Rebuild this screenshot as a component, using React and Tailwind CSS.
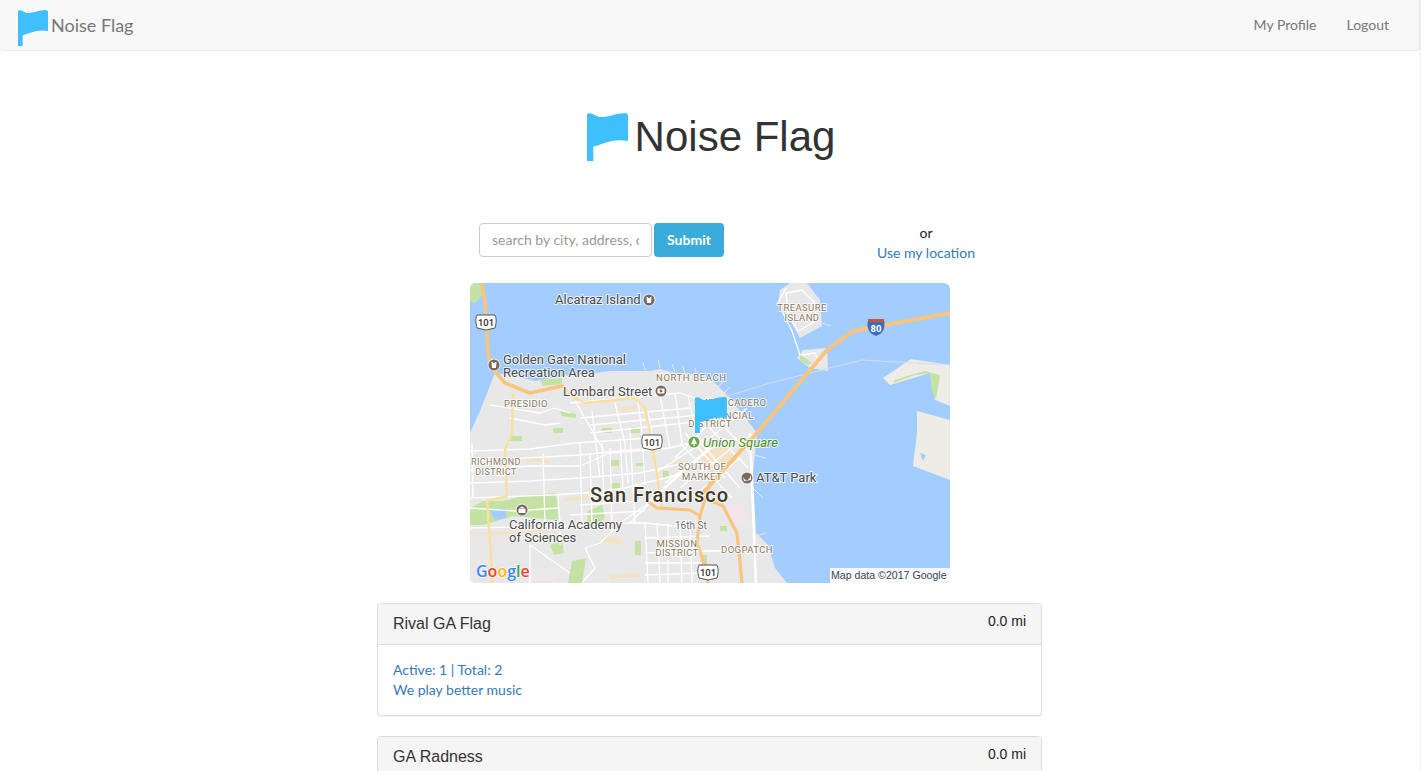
import React from "react";

const FLAG = "M0 1C3-1 7 2 10 3.5C18 6 28-1 37 0.3Q39 0.6 39 2L39 28C30 26 22 28 14 31C11 32 9 33 6 33.5L6 48L0 48Z";

function Flag({ className }) {
  return (
    <svg viewBox="0 0 39 48" preserveAspectRatio="none" className={className} fill="#40bfff">
      <path d={FLAG} />
    </svg>
  );
}

// map data, in pixels of the 480x300 map
const land = [
  "M0 150L10 128L25 90L40 92L65 98L100 92L125 90L140 88L180 88L190 86L205 90L230 92L245 100L260 115L287 150L283 190L286 250L298 262L305 285L317 300L0 300Z",
  "M310 7L320 0L337 0L350 17L352 43L330 55L320 37L308 20Z",
  "M327 75L333 67L357 65L358 88L340 85Z",
];

const eastLand = [
  "M413 95L441 76L480 82L480 123L465 117L460 90L420 102Z",
  "M447 128L480 137L480 197L443 183L447 150Z",
];

const parks = [
  "M0 225L13 218L33 218L57 212L87 210L88 237L43 233L13 242L0 242Z",
  "M118 228L132 222L135 235L125 244L117 240Z",
  "M80 262L92 258L94 270L84 272Z",
  "M102 278L116 275L112 300L98 300Z",
  "M140 200L150 200L150 208L140 208Z",
  "M165 258L171 258L171 272L165 272Z",
  "M71 97L92 95L92 101L72 103Z",
  "M90 128L106 131L106 135L92 133Z",
  "M83 145L93 145L93 150L83 150Z",
  "M132 145L142 145L142 150L132 150Z",
  "M161 144L170 144L170 150L161 150Z",
  "M423 100L445 92L460 90L462 110L466 116L470 92L455 88L440 92L425 97Z",
  "M250 243L257 243L257 248L250 248Z",
  "M231 272L237 272L237 283L231 283Z",
  "M140 177L149 177L149 183L140 183Z",
  "M166 180L175 180L175 183L166 183Z",
  "M193 188L199 188L199 195L193 195Z",
  "M40 153L52 153L52 158L40 158Z",
  "M331 72L342 80L338 82L329 77Z",
];

const sand = [
  "M95 215L118 212L118 216L95 219Z",
  "M148 125L166 122L166 126L150 129Z",
  "M0 250L80 247L80 250L0 252Z",
  "M140 292L170 290L170 294L140 296Z",
  "M135 252L155 258L150 262L132 258Z",
  "M47 172L80 178L80 181L47 176Z",
  "M155 165L170 165L170 168L155 168Z",
  "M228 170L262 160L262 178L240 190Z",
  "M200 178L216 178L216 182L200 182Z",
];

const pink = [
  "M255 222L274 222L276 240L258 240Z",
  "M86 208L92 208L92 216L86 216Z",
  "M140 232L150 232L150 240L140 240Z",
  "M60 292L85 292L85 298L60 298Z",
];

const whiteRoads = [
  "M0 187L60 183L110 183L140 170L200 165L240 155",
  "M0 168L60 166L105 160L180 155",
  "M0 200L60 198L110 195L170 190L215 180",
  "M0 215L80 212L115 210L155 205L215 190",
  "M0 245L95 243L150 240L175 240L225 245",
  "M0 178L110 172L170 166",
  "M110 222L170 218",
  "M100 232L175 228",
  "M88 212L90 240L90 262",
  "M73 170L75 240",
  "M2 160L3 215",
  "M110 160L112 240",
  "M120 170L122 240",
  "M132 160L134 222",
  "M140 165L142 240",
  "M150 155L154 222",
  "M160 150L165 240",
  "M122 128L130 195",
  "M145 120L155 160L158 200",
  "M168 118L172 150L175 200",
  "M100 120L210 110L225 115",
  "M110 135L220 125",
  "M120 142L230 132",
  "M120 150L235 138",
  "M105 118L135 170",
  "M178 130L182 150",
  "M190 112L200 165",
  "M205 110L212 160",
  "M218 112L226 150",
  "M115 265L130 260L150 240L176 222",
  "M115 265L125 285L112 300",
  "M175 240L178 300",
  "M187 240L190 300",
  "M198 240L198 300",
  "M210 240L212 300",
  "M220 240L222 300",
  "M175 255L240 253",
  "M175 270L240 268L280 268",
  "M175 280L235 280",
  "M175 292L235 290",
  "M185 190L240 155L277 125",
  "M195 200L255 155",
  "M210 205L262 165",
  "M225 212L270 175",
  "M205 175L250 130",
  "M210 160L262 215",
  "M222 150L270 205",
  "M235 140L278 185",
  "M215 150L255 195",
  "M245 135L280 170",
  "M316 5L308 20L322 48L330 72",
  "M316 10L332 7L345 20L346 38L328 48L318 30Z",
  "M160 240L178 222",
  "M20 122L70 130L85 125L100 130",
  "M40 135L75 142L90 140",
  "M0 225L45 228L88 225",
  "M60 300L60 262L100 290",
  "M332 72L345 70L350 80",
];

const piers = [
  "M175 87L173 80",
  "M190 85L188 77",
  "M205 89L202 81",
  "M215 91L213 83",
  "M227 92L225 85",
  "M240 97L246 91",
  "M248 104L254 98",
  "M254 110L260 104",
  "M282 163L292 163",
  "M284 172L296 175",
  "M283 205L293 215",
  "M286 253L296 250",
  "M287 265L298 262",
  "M352 40L361 43",
];

function PlaceIcon({ x, y, children, fill = "#7b6a5e" }) {
  return (
    <g>
      <circle cx={x} cy={y} r="6.5" fill="#fff" opacity="0.7" />
      <circle cx={x} cy={y} r="5.5" fill={fill} />
      {children}
    </g>
  );
}

function Label({ x, y, children, size = 13, fill = "#4b4b4b", anchor = "start", weight = 400, spacing = 0, italic = false }) {
  return (
    <text
      x={x}
      y={y}
      fontSize={size}
      fill={fill}
      textAnchor={anchor}
      fontWeight={weight}
      letterSpacing={spacing}
      fontStyle={italic ? "italic" : "normal"}
      stroke="#ffffff"
      strokeOpacity="0.75"
      strokeWidth="2"
      paintOrder="stroke"
    >
      {children}
    </text>
  );
}

function Shield({ x, y, label }) {
  return (
    <g>
      <path d={`M${x - 9} ${y - 7}L${x + 9} ${y - 7}C${x + 11} ${y - 3} ${x + 10} ${y + 2} ${x + 9} ${y + 6}L${x} ${y + 8}L${x - 9} ${y + 6}C${x - 10} ${y + 2} ${x - 11} ${y - 3} ${x - 9} ${y - 7}Z`} fill="#fff" stroke="#555" strokeWidth="1" />
      <text x={x} y={y + 3.5} textAnchor="middle" fontSize="9.5" fontWeight="500" fill="#333">{label}</text>
    </g>
  );
}

function SfMap() {
  return (
    <svg viewBox="0 0 480 300" className="block w-full h-full" style={{ fontFamily: "Roboto, sans-serif" }}>
      <rect width="480" height="300" fill="#a3ccff" />
      {land.map((d) => <path key={d} d={d} fill="#e8e8e8" />)}
      {eastLand.map((d) => <path key={d} d={d} fill="#eeece6" />)}
      <path d="M0 0L12 0L12 12L5 20L0 18Z" fill="#c5e2a5" />
      {parks.map((d) => <path key={d} d={d} fill="#c5e2a5" />)}
      {sand.map((d) => <path key={d} d={d} fill="#f3e2c6" />)}
      {pink.map((d) => <path key={d} d={d} fill="#f3e6ea" />)}
      <path d="M20 228L35 225L37 235L25 237Z" fill="#a3ccff" />
      <path d="M450 170L456 172L453 178Z" fill="#a3ccff" />
      <path d="M245 117L300 100L392 77L480 82" fill="none" stroke="#d4dfe8" strokeWidth="1" />

      <g fill="none" stroke="#e8e8e8" strokeWidth="1">
        {piers.map((d) => <path key={d} d={d} />)}
      </g>
      <g fill="none" stroke="#ffffff" strokeWidth="1.3" strokeLinejoin="round">
        {whiteRoads.map((d) => <path key={d} d={d} />)}
      </g>
      <path d="M176 222L200 200L240 165" fill="none" stroke="#ffffff" strokeWidth="2.5" />
      <path d="M280 150L286 300" fill="none" stroke="#ffffff" strokeWidth="2.5" />

      {/* yellow roads */}
      <g fill="none" stroke="#fbe09c" strokeWidth="2.4" strokeLinejoin="round">
        <path d="M92 103L105 115L115 120L165 115L175 125L182 160L192 224" />
        <path d="M43 110L42 150L35 167L37 213L17 218L23 300" />
      </g>
      {/* highways */}
      <g fill="none" stroke="#fac47c" strokeLinejoin="round" strokeLinecap="round">
        <path d="M12 0L15 20L18 70L22 85L35 100L60 110L92 103" strokeWidth="3.6" />
        <path d="M230 213L287 150L357 67L383 48L480 30" strokeWidth="4" />
        <path d="M177 218L187 225L220 227L230 233L240 200" strokeWidth="3" />
        <path d="M230 213L253 223L267 250L272 300" strokeWidth="3.2" />
        <path d="M230 233L227 260L233 277L238 300" strokeWidth="3" />
      </g>

      <Shield x={16} y={39} label="101" />
      <Shield x={182} y={159} label="101" />
      <Shield x={238} y={289} label="101" />
      <g>
        <path d="M398 37L414 37C416 46 412 51 406 53C400 51 396 46 398 37Z" fill="#3a6fb7" />
        <rect x="398" y="36" width="16" height="3" fill="#c9503f" />
        <text x="406" y="49" textAnchor="middle" fontSize="9.5" fontWeight="700" fill="#fff">80</text>
      </g>

      <PlaceIcon x={179} y={17}><path d="M176.5 14L178 14L178 15L180 15L180 14L181.5 14L181 20L177 20Z" fill="#fff" /></PlaceIcon>
      <PlaceIcon x={24} y={82}><path d="M21.5 79L23 79L23 80L25 80L25 79L26.5 79L26 85L22 85Z" fill="#fff" /></PlaceIcon>
      <PlaceIcon x={191} y={108}>
        <rect x="187.5" y="105.5" width="7" height="5" rx="1" fill="#fff" />
        <circle cx="191" cy="108" r="1.4" fill="#7b6a5e" />
      </PlaceIcon>
      <PlaceIcon x={52} y={227}>
        <path d="M48.5 225.5L52 223.5L55.5 225.5Z" fill="#fff" />
        <rect x="48.5" y="226" width="7" height="4" fill="#fff" />
      </PlaceIcon>
      <PlaceIcon x={277} y={195}><path d="M273 194C276 199 279 198 281 192L281 197L274 198Z" fill="#fff" /></PlaceIcon>
      <PlaceIcon x={224} y={159} fill="#6aa84a"><path d="M224 154.5L227 161L224.6 161L224.6 163L223.4 163L223.4 161L221 161Z" fill="#fff" /></PlaceIcon>

      <Label x={85} y={21}>Alcatraz Island</Label>
      <Label x={33} y={81}>Golden Gate National</Label>
      <Label x={33} y={94}>Recreation Area</Label>
      <Label x={93} y={113}>Lombard Street</Label>
      <Label x={186} y={98} size={9.5} fill="#8a7a60" spacing={0.6}>NORTH BEACH</Label>
      <Label x={34} y={124} size={9.5} fill="#8a7a60" spacing={0.4}>PRESIDIO</Label>
      <Label x={332} y={28} size={9.5} fill="#8a7a60" anchor="middle" spacing={0.4}>TREASURE</Label>
      <Label x={332} y={38} size={9.5} fill="#8a7a60" anchor="middle" spacing={0.4}>ISLAND</Label>
      <Label x={224} y={123} size={9.5} fill="#8a7a60" spacing={0.4}>EMBARCADERO</Label>
      <Label x={258} y={136} size={9.5} fill="#8a7a60" anchor="middle" spacing={0.4}>FINANCIAL</Label>
      <Label x={240} y={144} size={9.5} fill="#8a7a60" anchor="middle" spacing={0.4}>DISTRICT</Label>
      <Label x={233} y={164} fill="#4a8c1c" italic>Union Square</Label>
      <Label x={232} y={187} size={9.5} fill="#8a7a60" anchor="middle" spacing={0.4}>SOUTH OF</Label>
      <Label x={232} y={197} size={9.5} fill="#8a7a60" anchor="middle" spacing={0.4}>MARKET</Label>
      <Label x={26} y={182} size={9} fill="#8a7a60" anchor="middle" spacing={0.4}>RICHMOND</Label>
      <Label x={26} y={192} size={9} fill="#8a7a60" anchor="middle" spacing={0.4}>DISTRICT</Label>
      <Label x={120} y={219} size={20} fill="#40382c" weight={500} spacing={1}>San Francisco</Label>
      <Label x={39} y={246}>California Academy</Label>
      <Label x={39} y={259}>of Sciences</Label>
      <Label x={205} y={246} size={10} fill="#6f6f6f">16th St</Label>
      <Label x={207} y={264} size={9.5} fill="#8a7a60" anchor="middle" spacing={0.4}>MISSION</Label>
      <Label x={207} y={273} size={9.5} fill="#8a7a60" anchor="middle" spacing={0.4}>DISTRICT</Label>
      <Label x={286} y={199}>AT&amp;T Park</Label>
      <Label x={277} y={270} size={9.5} fill="#8a7a60" anchor="middle" spacing={0.4}>DOGPATCH</Label>

      <text x="6" y="294" fontSize="16" fontWeight="600" style={{ fontFamily: "'Open Sans', sans-serif" }} stroke="#ffffff" strokeOpacity="0.6" strokeWidth="1.5" paintOrder="stroke">
        <tspan fill="#4285f4">G</tspan>
        <tspan fill="#ea4335">o</tspan>
        <tspan fill="#fbbc05">o</tspan>
        <tspan fill="#4285f4">g</tspan>
        <tspan fill="#34a853">l</tspan>
        <tspan fill="#ea4335">e</tspan>
      </text>

      <rect x="360" y="285" width="120" height="15" fill="#ffffff" fillOpacity="0.9" />
      <text x="361" y="296" fontSize="10.6" fill="#444" style={{ fontFamily: "'Liberation Sans', sans-serif" }}>Map data ©2017 Google</text>

      <g transform="translate(225 114) scale(0.82 0.75)" fill="#40bfff">
        <path d={FLAG} />
      </g>
    </svg>
  );
}

function GroupCard({ title, distance, active, total, description }) {
  return (
    <div className="mb-5 mr-px rounded border border-[#ddd] bg-white shadow-[0_1px_1px_rgba(0,0,0,0.05)] overflow-hidden">
      <div className="flex items-start justify-between h-[41px] px-[15px] bg-[#f5f5f5] border-b border-[#ddd]">
        <h3 className="mt-[11px] text-base leading-[18px] text-[#333] font-['Liberation_Sans',sans-serif]">{title}</h3>
        <span className="mt-[9px] text-sm leading-[17px] text-[#222] font-['Liberation_Sans',sans-serif]">{distance}</span>
      </div>
      <div className="p-[15px] text-sm leading-5 text-[#337ab7]">
        <p>Active: {active} | Total: {total}</p>
        <p>{description}</p>
      </div>
    </div>
  );
}

export default function App() {
  return (
    <div className="h-[771px] overflow-hidden bg-white border-r border-[#eee] font-['Lato',sans-serif]">
      {/* Navbar */}
      <nav className="flex items-center justify-between h-[51px] bg-[#f8f8f8] border-b border-r border-[#e7e7e7] rounded-b">
        <a className="flex items-center ml-[18px] text-lg text-[#777]">
          <Flag className="w-[30px] h-9 mt-[5px]" />
          <span className="ml-[3px]">Noise Flag</span>
        </a>
        <div className="flex gap-[30px] mr-[30px] text-sm text-[#777]">
          <a>My Profile</a>
          <a>Logout</a>
        </div>
      </nav>

      {/* Title */}
      <div className="flex justify-center items-center mt-[62px] h-12 pl-[2px]">
        <Flag className="w-[41px] h-12" />
        <h1 className="ml-[7px] text-[42px] leading-none text-[#333] font-['Liberation_Sans',sans-serif]">Noise Flag</h1>
      </div>

      <div className="w-[666px] mx-auto">
        {/* Search */}
        <div className="flex items-start h-[40px] mt-[62px] pl-[102px] pr-[68px]">
          <input
            placeholder="search by city, address, or zip"
            className="w-[173px] h-[34px] px-3 pb-[2px] text-sm bg-white border border-[#ccc] rounded outline-none placeholder:text-[#999]"
          />
          <button className="w-[70px] h-[34px] ml-[2px] text-sm font-bold text-white bg-[#39acdc] rounded">Submit</button>
          <div className="ml-auto text-sm leading-5 text-center text-[#222]">
            <p>or</p>
            <a className="text-[#337ab7]">Use my location</a>
          </div>
        </div>

        {/* Map */}
        <div className="w-[480px] h-[300px] mx-auto mt-5 mb-5 rounded-md overflow-hidden">
          <SfMap />
        </div>

        <GroupCard title="Rival GA Flag" distance="0.0 mi" active={1} total={2} description="We play better music" />
        <GroupCard title="GA Radness" distance="0.0 mi" active={1} total={1} description="" />
      </div>
    </div>
  );
}
